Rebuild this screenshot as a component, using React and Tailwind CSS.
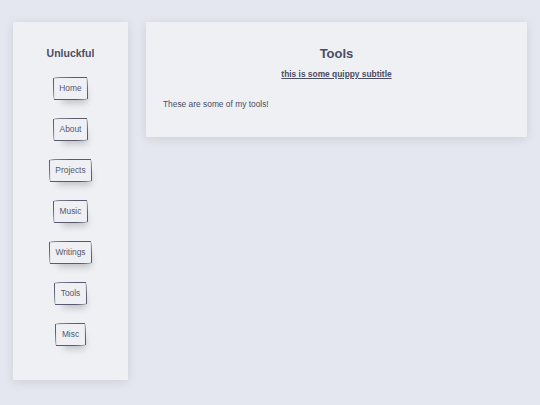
import React from "react";

const links = ["Home", "About", "Projects", "Music", "Writings", "Tools", "Misc"];

const NavButton = ({ label }) => (
  <button className="bg-transparent border border-[#5a596e] px-[5.5px] h-[23px] text-[8.4px] leading-none text-[#55576c] rounded-[255px_15px_225px_15px/15px_225px_15px_255px] shadow-[4px_8px_7px_-5px_rgba(0,0,0,0.2)]">
    {label}
  </button>
);

const App = () => {
  return (
    <div
      className="min-h-screen bg-[#e4e7ef] flex items-start gap-[18px] pl-[13px] pr-[13px] pt-[22px]"
      style={{ fontFamily: '"Liberation Sans", Arial, sans-serif' }}
    >
      <aside className="w-[115px] h-[358px] shrink-0 bg-[#eff0f4] shadow-[0_2px_10px_rgba(0,0,0,0.1)] flex flex-col items-center pt-[25px]">
        <h2 className="text-[10.5px] leading-[12px] font-bold text-[#4b4d63]">Unluckful</h2>
        <nav className="mt-[18px] flex flex-col items-center gap-[18px]">
          {links.map((l) => (
            <NavButton key={l} label={l} />
          ))}
        </nav>
      </aside>

      <main className="flex-1 bg-[#eff0f4] shadow-[0_2px_10px_rgba(0,0,0,0.1)] pt-[25px] pb-[28px] px-[17px] text-[#4b4d63]">
        <h1 className="text-center text-[13px] leading-[14px] font-bold">Tools</h1>
        <h3 className="mt-[8px] text-center text-[8.4px] leading-[10px] font-bold underline">
          this is some quippy subtitle
        </h3>
        <p className="mt-[20px] text-[8.4px] leading-[10px]">These are some of my tools!</p>
      </main>
    </div>
  );
};

export default App;
